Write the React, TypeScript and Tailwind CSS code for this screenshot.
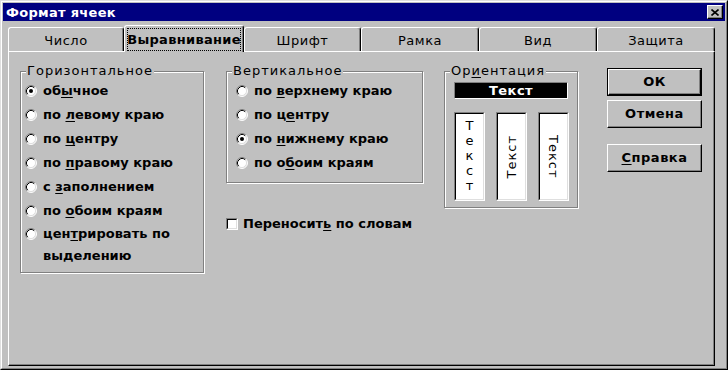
import React from "react";

const U = ({ children }: { children: React.ReactNode }) => (
  <span className="underline decoration-1 underline-offset-[2px]">{children}</span>
);

function Radio({ checked }: { checked?: boolean }) {
  return (
    <svg width="12" height="12" viewBox="0 0 12 12" className="shrink-0 block">
      <circle cx="6" cy="6" r="5" fill="#fff" />
      <path d="M2.11 9.89 A5.5 5.5 0 0 1 9.89 2.11" stroke="#808080" strokeWidth="1" fill="none" />
      <path d="M2.82 9.18 A4.5 4.5 0 0 1 9.18 2.82" stroke="#000" strokeWidth="1" fill="none" />
      <path d="M9.89 2.11 A5.5 5.5 0 0 1 2.11 9.89" stroke="#fff" strokeWidth="1" fill="none" />
      <path d="M9.18 2.82 A4.5 4.5 0 0 1 2.82 9.18" stroke="#dfdfdf" strokeWidth="1" fill="none" />
      {checked && <circle cx="6" cy="6" r="2" fill="#000" />}
    </svg>
  );
}

function RadioRow({ checked, children }: { checked?: boolean; children: React.ReactNode }) {
  return (
    <div className="flex items-center h-[24px] gap-[6px]">
      <Radio checked={checked} />
      <span className="font-bold whitespace-nowrap">{children}</span>
    </div>
  );
}

const groupCls =
  "border border-[#808080] shadow-[inset_1px_1px_0_#fff,1px_1px_0_#fff] shrink-0";
const legendCls = "px-px leading-[16px] tracking-[1px] bg-[#c0c0c0]";

function Tab({ label, w }: { label: string; w: string }) {
  return (
    <div
      className={`${w} h-[24px] shrink-0 flex items-center justify-center pt-[2px] border-t border-l border-white border-r border-r-black rounded-t-[3px] shadow-[inset_-1px_0_0_#808080] tracking-[0.5px]`}
    >
      {label}
    </div>
  );
}

function Button({ children, def }: { children: React.ReactNode; def?: boolean }) {
  const inner = (
    <div className="h-full border-t border-l border-white border-r border-b border-r-black border-b-black">
      <div className="h-full flex items-center justify-center font-bold tracking-[0.5px] shadow-[inset_-1px_-1px_0_#808080]">
        {children}
      </div>
    </div>
  );
  return def ? (
    <div className="w-[95px] h-[28px] border border-black">{inner}</div>
  ) : (
    <div className="w-[95px] h-[28px]">{inner}</div>
  );
}

const sunkenBox =
  "border border-t-[#808080] border-l-[#808080] border-r-white border-b-white";

export default function App() {
  return (
    <div
      className="w-[728px] h-[370px] bg-[#c0c0c0] text-black text-[13px] border border-t-[#dfdfdf] border-l-[#dfdfdf] border-r-black border-b-black"
      style={{ fontFamily: '"DejaVu Sans", "Liberation Sans", sans-serif' }}
    >
      <div className="h-full flex flex-col p-px border border-t-white border-l-white border-r-[#808080] border-b-[#808080]">
        {/* Title bar */}
        <div className="h-[18px] shrink-0 bg-[#000080] flex items-center pl-[3px] pr-[2px]">
          <span className="text-white font-bold tracking-[0.3px] leading-none">Формат ячеек</span>
          <div className="ml-auto w-[16px] h-[14px] bg-[#c0c0c0] border-t border-l border-white border-r border-b border-r-black border-b-black shadow-[inset_-1px_-1px_0_#808080] flex items-center justify-center">
            <svg width="8" height="7" viewBox="0 0 8 7" className="block">
              <path d="M0.5 0.5 L7.5 6.5 M7.5 0.5 L0.5 6.5" stroke="#000" strokeWidth="1.6" />
            </svg>
          </div>
        </div>

        <div className="flex-1 flex flex-col pl-[5px] pr-[10px] pb-px">
          {/* Tabs */}
          <div className="h-[30px] shrink-0 flex items-end">
            <Tab label="Число" w="w-[116px]" />
            <div className="relative z-10 w-[120px] h-[27px] -mb-px shrink-0 bg-[#c0c0c0] border-t border-l border-white border-r border-r-black rounded-t-[3px] shadow-[inset_-1px_0_0_#808080] p-[2px] pb-[1px]">
              <div className="h-full flex items-center justify-center border border-dotted border-black font-bold tracking-[0.3px]">
                Выравнивание
              </div>
            </div>
            <Tab label="Шрифт" w="w-[117px]" />
            <Tab label="Рамка" w="w-[118px]" />
            <Tab label="Вид" w="w-[118px]" />
            <Tab label="Защита" w="w-[118px]" />
          </div>

          {/* Panel */}
          <div className="flex-1 flex items-start pl-[11px] pt-[11px] border-t border-l border-white border-r border-b border-r-black border-b-black shadow-[inset_-1px_-1px_0_#808080]">
            {/* Horizontal */}
            <fieldset className={`${groupCls} w-[184px] h-[210px] pl-[4px]`}>
              <legend className={`${legendCls} ml-[1px]`}>Горизонтальное</legend>
              <RadioRow checked>
                об<U>ы</U>чное
              </RadioRow>
              <RadioRow>
                по <U>л</U>евому краю
              </RadioRow>
              <RadioRow>
                по <U>ц</U>ентру
              </RadioRow>
              <RadioRow>
                по <U>п</U>равому краю
              </RadioRow>
              <RadioRow>
                с <U>з</U>аполнением
              </RadioRow>
              <RadioRow>
                по <U>о</U>боим краям
              </RadioRow>
              <div className="flex items-start gap-[6px]">
                <div className="pt-[5px]">
                  <Radio />
                </div>
                <span className="font-bold leading-[22px] whitespace-nowrap">
                  цен<U>т</U>рировать по
                  <br />
                  выделению
                </span>
              </div>
            </fieldset>

            {/* Vertical + checkbox */}
            <div className="ml-[22px] flex flex-col shrink-0">
              <fieldset className={`${groupCls} w-[197px] h-[120px] pl-[9px]`}>
                <legend className={`${legendCls} -ml-[4px]`}>Вертикальное</legend>
                <RadioRow>
                  по <U>в</U>ерхнему краю
                </RadioRow>
                <RadioRow>
                  по ц<U>е</U>нтру
                </RadioRow>
                <RadioRow checked>
                  по <U>н</U>ижнему краю
                </RadioRow>
                <RadioRow>
                  по о<U>б</U>оим краям
                </RadioRow>
              </fieldset>
              <div className="mt-[33px] h-[16px] flex items-center gap-[5px]">
                <div className={`${sunkenBox} w-[12px] h-[12px]`}>
                  <div className="w-full h-full bg-white border border-t-black border-l-black border-r-[#dfdfdf] border-b-[#dfdfdf]" />
                </div>
                <span className="font-bold whitespace-nowrap">
                  Переносит<U>ь</U> по словам
                </span>
              </div>
            </div>

            {/* Orientation */}
            <fieldset className={`${groupCls} ml-[21px] w-[134px] h-[145px] pl-[9px]`}>
              <legend className={`${legendCls} -ml-[4px]`}>
                Ор<U>и</U>ентация
              </legend>
              <div className={`${sunkenBox} mt-[3px] w-[114px] h-[17px]`}>
                <div className="w-full h-full bg-black text-white font-bold flex items-center justify-center tracking-[0.5px] leading-none">
                  Текст
                </div>
              </div>
              <div className="mt-[13px] flex gap-[11px]">
                <div className={`${sunkenBox} w-[31px] h-[89px]`}>
                  <div className="w-full h-full bg-white border border-t-black border-l-black border-r-[#dfdfdf] border-b-[#dfdfdf] flex flex-col items-center pt-[4px] leading-[15px]">
                    <span>Т</span>
                    <span>е</span>
                    <span>к</span>
                    <span>с</span>
                    <span>т</span>
                  </div>
                </div>
                <div className={`${sunkenBox} w-[31px] h-[89px]`}>
                  <div className="w-full h-full bg-white border border-t-black border-l-black border-r-[#dfdfdf] border-b-[#dfdfdf] flex items-center justify-center">
                    <span className="[writing-mode:vertical-rl] rotate-180 tracking-[1px] leading-none">Текст</span>
                  </div>
                </div>
                <div className={`${sunkenBox} w-[31px] h-[89px]`}>
                  <div className="w-full h-full bg-white border border-t-black border-l-black border-r-[#dfdfdf] border-b-[#dfdfdf] flex items-center justify-center">
                    <span className="[writing-mode:vertical-rl] tracking-[1px] leading-none">Текст</span>
                  </div>
                </div>
              </div>
            </fieldset>

            {/* Buttons */}
            <div className="ml-[29px] mt-[5px] flex flex-col shrink-0">
              <Button def>ОК</Button>
              <div className="mt-[4px]">
                <Button>Отмена</Button>
              </div>
              <div className="mt-[16px]">
                <Button>
                  <U>С</U>правка
                </Button>
              </div>
            </div>
          </div>
        </div>
      </div>
    </div>
  );
}
